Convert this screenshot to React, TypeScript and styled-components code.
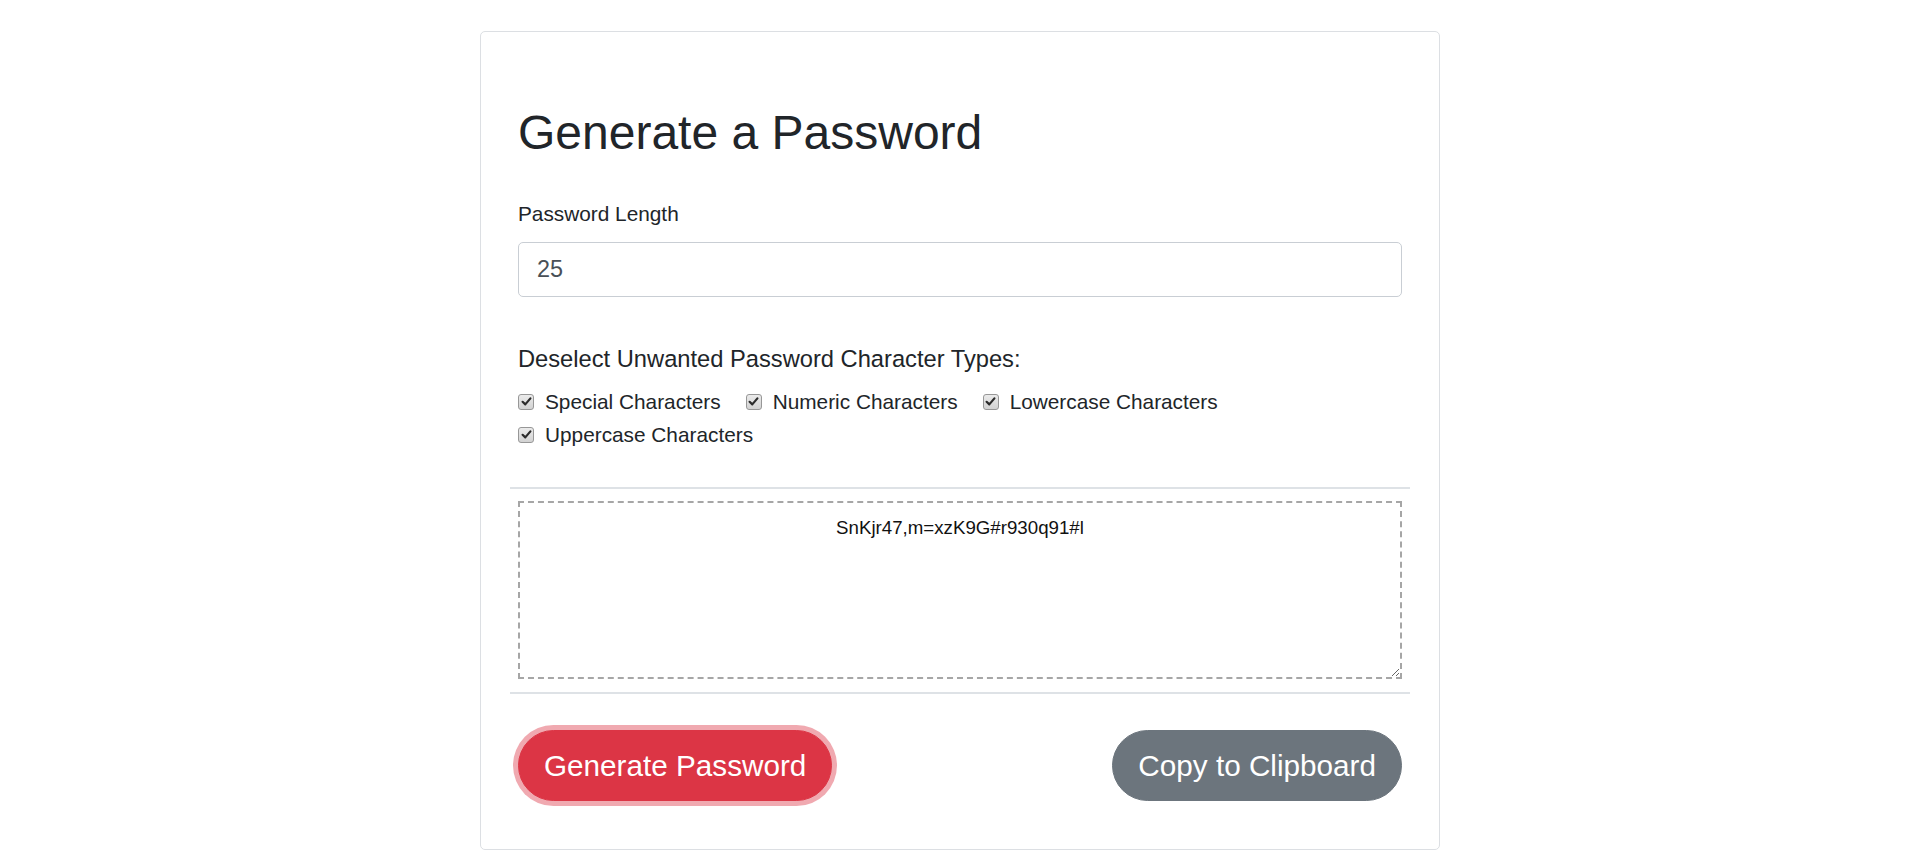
import React from "react";
import styled, { createGlobalStyle } from "styled-components";

const GlobalStyle = createGlobalStyle`
  html, body {
    margin: 0;
    padding: 0;
    background: #ffffff;
  }
  body {
    font-family: "Liberation Sans", Arial, sans-serif;
    color: #212529;
  }
  * { box-sizing: border-box; }
`;

const Page = styled.main`
  display: flex;
  justify-content: center;
  padding-top: 31px;
`;

const Card = styled.section`
  width: 960px;
  border: 1px solid #dcdfe3;
  border-radius: 5px;
  background: #fff;
  padding: 72px 37px 48px;
  display: flex;
  flex-direction: column;
`;

const Title = styled.h1`
  margin: 0;
  font-size: 48px;
  line-height: 58px;
  font-weight: 400;
  color: #212529;
`;

const FieldLabel = styled.label`
  display: block;
  margin-top: 37px;
  font-size: 20.8px;
  line-height: 30px;
  color: #212529;
`;

const NumberInput = styled.input`
  display: block;
  width: 100%;
  height: 55px;
  margin-top: 13px;
  padding: 0 18px;
  border: 1px solid #c9ced4;
  border-radius: 5px;
  font-family: "Liberation Sans", Arial, sans-serif;
  font-size: 23.4px;
  color: #495057;
  background: #fff;
  outline: none;
`;

const GroupTitle = styled.p`
  margin: 48px 0 0;
  font-size: 23.7px;
  line-height: 28px;
  color: #212529;
`;

const Options = styled.div`
  margin-top: 12px;
  display: flex;
  flex-wrap: wrap;
  column-gap: 25px;
`;

const Option = styled.label`
  display: flex;
  align-items: center;
  gap: 11px;
  height: 33px;
  font-size: 20.8px;
  line-height: 33px;
  color: #212529;
`;

const Box = styled.span`
  width: 16px;
  height: 16px;
  border: 1px solid #979797;
  border-radius: 3px;
  background: linear-gradient(#ebebeb, #d2d2d2);
  display: flex;
  align-items: center;
  justify-content: center;
`;

const OutputArea = styled.div`
  margin: 36px -8px 0;
  padding: 12px 8px 13px;
  border-top: 2px solid #dee2e6;
  border-bottom: 2px solid #dee2e6;
`;

const Output = styled.textarea`
  display: block;
  width: 100%;
  height: 178px;
  padding: 14px 4px 4px;
  border: 2px dashed #a6a6a6;
  border-radius: 0;
  font-family: "Liberation Sans", Arial, sans-serif;
  font-size: 18.7px;
  text-align: center;
  color: #111;
  background: #fff;
  outline: none;
`;

const Actions = styled.div`
  margin-top: 36px;
  display: flex;
  justify-content: space-between;
  align-items: center;
`;

const Button = styled.button<{ $variant: "danger" | "secondary"; $focused?: boolean }>`
  height: 71px;
  padding: 0 25px;
  border: 1px solid ${(p) => (p.$variant === "danger" ? "#dc3545" : "#6c757d")};
  border-radius: 36px;
  background: ${(p) => (p.$variant === "danger" ? "#dc3545" : "#6c757d")};
  color: #fff;
  font-family: "Liberation Sans", Arial, sans-serif;
  font-size: 29.7px;
  line-height: 45px;
  cursor: pointer;
  box-shadow: ${(p) => (p.$focused ? "0 0 0 5px rgba(225, 83, 97, 0.5)" : "none")};
`;

function Check({ label }: { label: string }) {
  return (
    <Option>
      <Box>
        <svg width="11" height="11" viewBox="0 0 11 11">
          <path d="M1.6 5.8 L4.3 8.4 L9.4 2.4" fill="none" stroke="#2b2b2b" strokeWidth="2.2" strokeLinecap="round" strokeLinejoin="round" />
        </svg>
      </Box>
      {label}
    </Option>
  );
}

export default function App() {
  return (
    <>
      <GlobalStyle />
      <Page>
        <Card>
          <Title>Generate a Password</Title>
          <FieldLabel htmlFor="len">Password Length</FieldLabel>
          <NumberInput id="len" type="text" defaultValue="25" />
          <GroupTitle>Deselect Unwanted Password Character Types:</GroupTitle>
          <Options>
            <Check label="Special Characters" />
            <Check label="Numeric Characters" />
            <Check label="Lowercase Characters" />
            <Check label="Uppercase Characters" />
          </Options>
          <OutputArea>
            <Output readOnly defaultValue="SnKjr47,m=xzK9G#r930q91#l" />
          </OutputArea>
          <Actions>
            <Button $variant="danger" $focused>Generate Password</Button>
            <Button $variant="secondary">Copy to Clipboard</Button>
          </Actions>
        </Card>
      </Page>
    </>
  );
}
